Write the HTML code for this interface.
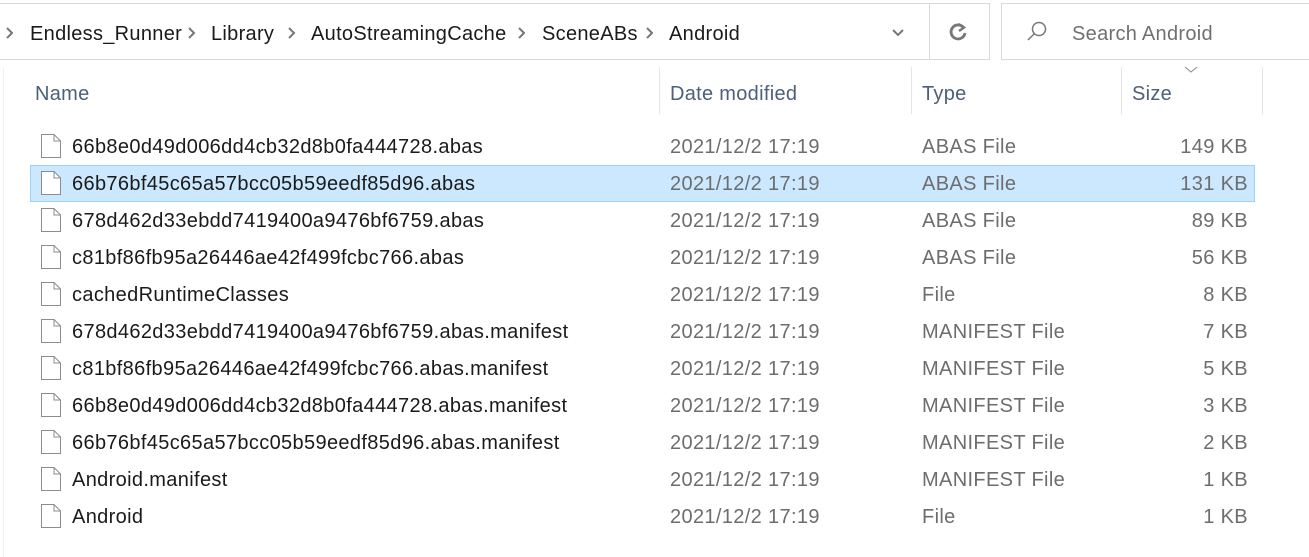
<!DOCTYPE html>
<html><head><meta charset="utf-8"><style>
body{margin:0;width:1309px;height:557px;background:#fff;font-family:"Liberation Sans",sans-serif;position:relative;overflow:hidden}
.a{position:absolute;white-space:nowrap}
.bc{font-size:20px;color:#1a1a1a;top:23px;letter-spacing:0.3px}
.ch{top:26px}
.h{top:83px;font-size:20px;color:#4c607a;letter-spacing:0.3px}
.vl{position:absolute;top:67px;height:47px;width:1px;background:#e5e5e5}
.row{position:absolute;left:30px;width:1225px;height:37px;font-size:20px;letter-spacing:0.35px}
.row span{position:absolute;top:8px}
.n{left:42px;color:#1a1a1a}
.d{left:640px;color:#6d6d6d}
.t{left:892px;color:#6d6d6d}
.s{right:7px;color:#6d6d6d}
.ic{position:absolute;left:10px;top:5px}
</style></head><body>
<div class="a" style="left:-1px;top:3px;width:989px;height:55px;border:1px solid #d9d9d9"></div>
<div class="a" style="left:929px;top:3px;width:1px;height:56px;background:#d9d9d9"></div>
<div class="a" style="left:1001px;top:3px;width:320px;height:55px;border:1px solid #d9d9d9"></div>
<svg class="a ch" style="left:5px" width="10" height="14"><path d="M2 2 L7 7 L2 12" stroke="#777" stroke-width="2" fill="none"/></svg>
<div class="a bc" style="left:30px">Endless_Runner</div>
<svg class="a ch" style="left:187px" width="10" height="14"><path d="M2 2 L7 7 L2 12" stroke="#777" stroke-width="2" fill="none"/></svg>
<div class="a bc" style="left:211px">Library</div>
<svg class="a ch" style="left:287px" width="10" height="14"><path d="M2 2 L7 7 L2 12" stroke="#777" stroke-width="2" fill="none"/></svg>
<div class="a bc" style="left:311px">AutoStreamingCache</div>
<svg class="a ch" style="left:517px" width="10" height="14"><path d="M2 2 L7 7 L2 12" stroke="#777" stroke-width="2" fill="none"/></svg>
<div class="a bc" style="left:542px">SceneABs</div>
<svg class="a ch" style="left:645px" width="10" height="14"><path d="M2 2 L7 7 L2 12" stroke="#777" stroke-width="2" fill="none"/></svg>
<div class="a bc" style="left:669px">Android</div>
<svg class="a" style="left:891px;top:28px" width="14" height="10"><path d="M2 2 L7 7 L12 2" stroke="#777" stroke-width="2" fill="none"/></svg>
<svg class="a" style="left:947px;top:21px" width="22" height="22"><path d="M16.5 6.5 A7 7 0 1 0 18 12" stroke="#777" stroke-width="2.8" fill="none"/><path d="M11.5 3 L17 6.5 L12 10" stroke="#777" stroke-width="2.4" fill="none"/></svg>
<svg class="a" style="left:1025px;top:20px" width="24" height="24"><circle cx="14" cy="9" r="6.5" stroke="#777" stroke-width="1.5" fill="none"/><path d="M9.5 13.5 L3 20" stroke="#777" stroke-width="1.5"/></svg>
<div class="a" style="left:1072px;top:23px;font-size:20px;color:#707070;letter-spacing:0.3px">Search Android</div>
<div class="a" style="left:3px;top:67px;width:1px;height:490px;background:#f0f0f0"></div>
<div class="a h" style="left:35px">Name</div>
<div class="vl" style="left:659px"></div>
<div class="a h" style="left:670px">Date modified</div>
<div class="vl" style="left:911px"></div>
<div class="a h" style="left:922px">Type</div>
<div class="vl" style="left:1121px"></div>
<div class="a h" style="left:1132px">Size</div>
<div class="vl" style="left:1262px"></div>
<svg class="a" style="left:1184px;top:66px" width="14" height="8"><path d="M1 1 L7 6 L13 1" stroke="#888" stroke-width="1" fill="none"/></svg>
<div id="rows"></div>
<script>
var r=[["66b8e0d49d006dd4cb32d8b0fa444728.abas","ABAS File","149 KB"],["66b76bf45c65a57bcc05b59eedf85d96.abas","ABAS File","131 KB"],["678d462d33ebdd7419400a9476bf6759.abas","ABAS File","89 KB"],["c81bf86fb95a26446ae42f499fcbc766.abas","ABAS File","56 KB"],["cachedRuntimeClasses","File","8 KB"],["678d462d33ebdd7419400a9476bf6759.abas.manifest","MANIFEST File","7 KB"],["c81bf86fb95a26446ae42f499fcbc766.abas.manifest","MANIFEST File","5 KB"],["66b8e0d49d006dd4cb32d8b0fa444728.abas.manifest","MANIFEST File","3 KB"],["66b76bf45c65a57bcc05b59eedf85d96.abas.manifest","MANIFEST File","2 KB"],["Android.manifest","MANIFEST File","1 KB"],["Android","File","1 KB"]];
var h="";r.forEach(function(x,i){var sel=i==1?"background:#cce8ff;box-shadow:inset 0 0 0 1px #99d1ff;":"";
h+='<div class="row" style="top:'+(128+i*37)+'px;'+sel+'"><svg class="ic" width="22" height="26"><path d="M1.5 1.5 H14 L20.5 8 V24.5 H1.5 Z" fill="#fff" stroke="#8c8c8c"/><path d="M14 1.5 V8 H20.5" fill="none" stroke="#8c8c8c"/></svg><span class="n">'+x[0]+'</span><span class="d">2021/12/2 17:19</span><span class="t">'+x[1]+'</span><span class="s">'+x[2]+'</span></div>';});
document.getElementById("rows").innerHTML=h;
</script>
</body></html>
